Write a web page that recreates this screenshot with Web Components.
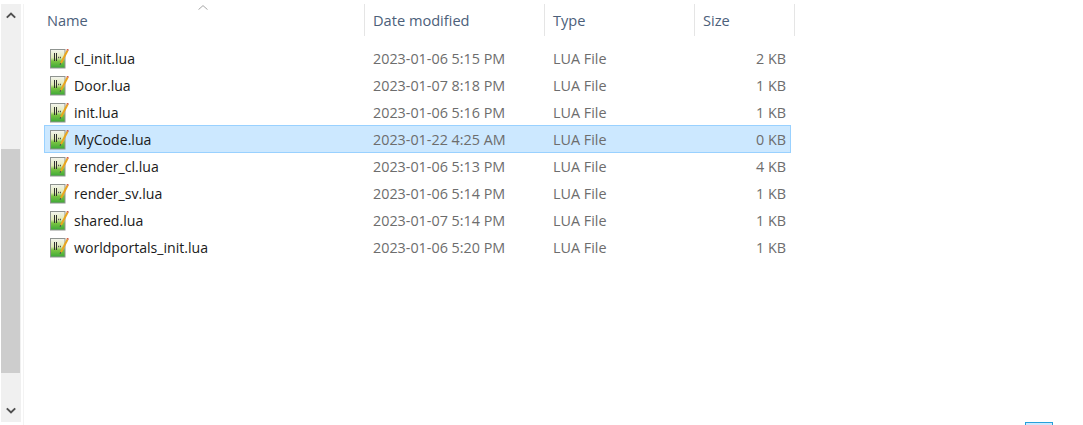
<!DOCTYPE html>
<html><head><meta charset="utf-8">
<style>
html,body{margin:0;padding:0;background:#fff;height:425px;overflow:hidden;font-family:"Open Sans","Noto Sans",sans-serif;}
</style></head><body>
<template id="t-icon"><style>:host{display:block;width:22px;height:20px;flex:none}svg{display:block}</style>
<svg width="22" height="20" viewBox="0 0 22 20">
<defs><linearGradient id="g" x1="0" y1="0" x2="0" y2="1"><stop offset="0" stop-color="#f4f4f0"/><stop offset=".45" stop-color="#dfeab4"/><stop offset=".62" stop-color="#7cc443"/><stop offset="1" stop-color="#3aa836"/></linearGradient></defs>
<rect x="2.5" y="0.5" width="14.5" height="18.5" fill="url(#g)" stroke="#8f9490"/>
<path d="M6.5 4v8M8.5 4v8" stroke="#2e2e2e" stroke-width="1"/>
<path d="M10 8.5h1.2M12 8.5h1" stroke="#555" stroke-width="1.3"/>
<path d="M13 14 L19.5 1.5" stroke="#eaa51f" stroke-width="2"/>
<path d="M18.8 .3l1.8 1" stroke="#d05a40" stroke-width="1.4"/>
<path d="M12.1 16l.5-2" stroke="#555" stroke-width="1"/>
</svg></template>
<template id="t-scroll"><style>
:host{display:flex;flex-direction:column;width:20px;height:418px;margin:4px 0 0 1px;background:#f0f0f0;flex:none;position:relative}
.btn{height:23px;display:flex;align-items:center;justify-content:center;flex:none;padding-right:1px}
.sp1{height:122px;flex:none}.thumb{height:224px;width:19px;background:#cdcdcd;flex:none}.sp2{flex:1}
svg{display:block}
</style>
<div class="btn"><svg width="10" height="7" viewBox="0 0 10 7"><path d="M.8 5.6 5 1.6l4.2 4" fill="none" stroke="#505050" stroke-width="2"/></svg></div>
<div class="sp1"></div><div class="thumb"></div><div class="sp2"></div>
<div class="btn"><svg width="10" height="7" viewBox="0 0 10 7"><path d="M.8 1.4 5 5.4l4.2-4" fill="none" stroke="#505050" stroke-width="2"/></svg></div>
</template>
<template id="t-head"><style>
:host{display:block;box-sizing:border-box;height:32px;flex:none;position:relative}
.r{display:grid;grid-template-columns:321px 180px 150px 100px;margin-left:20px;width:752px;height:32px;font-size:14.6px;color:#4c607a}
</style><div class="r"><slot></slot></div>
<svg style="position:absolute;left:174px;top:1px" width="10" height="5" viewBox="0 0 10 5"><path d="M.5 4.6 5 .6l4.5 4" fill="none" stroke="#a6a6a6" stroke-width="1"/></svg></template>
<template id="t-col"><style>
:host{display:flex;align-items:center;box-sizing:border-box;padding-left:8px;padding-right:6px;border-right:1px solid #e5e5e5;height:32px}
:host([first]){padding-left:3px}
</style><slot></slot></template>
<template id="t-row"><style>
:host{display:grid;grid-template-columns:321px 180px 150px 96px;height:27px;box-sizing:border-box;width:747px;font-size:14.35px;color:#6d6d6d;align-items:center}
:host([selected]){background:#cce8ff;box-shadow:0 -1px 0 #99d1ff,inset 1px 0 #99d1ff,inset -1px 0 #99d1ff,inset 0 -1px #99d1ff}
.n{display:flex;align-items:center;gap:4px;padding-left:4px;color:#1a1a1a;white-space:nowrap;font-size:14.1px}
.d,.t{padding-left:8px;white-space:nowrap}
.s{text-align:right;padding-right:5px;white-space:nowrap}
</style>
<div class="n"><file-icon></file-icon><span id="n"></span></div><div class="d" id="d"></div><div class="t">LUA File</div><div class="s" id="s"></div></template>
<template id="t-app"><style>
:host{display:flex;width:1083px;height:425px;position:relative;overflow:hidden;background:#fff}
.main{flex:1;display:flex;flex-direction:column;margin-left:2px;border-left:1px solid #f3f3f3;margin-top:4px}
.rows{display:flex;flex-direction:column;margin-left:20px;margin-top:9px}
.mark{position:absolute;left:1025px;top:422px;width:28px;height:10px;box-sizing:border-box;background:#cce8ff;border:1px solid #26a0da}
</style>
<scroll-bar></scroll-bar>
<div class="main"><list-head><head-col first>Name</head-col><head-col>Date modified</head-col><head-col>Type</head-col><head-col>Size</head-col></list-head>
<div class="rows"><slot></slot></div></div><div class="mark"></div></template>
<file-list>
<file-row name="cl_init.lua" date="2023-01-06 5:15 PM" size="2 KB"></file-row>
<file-row name="Door.lua" date="2023-01-07 8:18 PM" size="1 KB"></file-row>
<file-row name="init.lua" date="2023-01-06 5:16 PM" size="1 KB"></file-row>
<file-row name="MyCode.lua" date="2023-01-22 4:25 AM" size="0 KB" selected></file-row>
<file-row name="render_cl.lua" date="2023-01-06 5:13 PM" size="4 KB"></file-row>
<file-row name="render_sv.lua" date="2023-01-06 5:14 PM" size="1 KB"></file-row>
<file-row name="shared.lua" date="2023-01-07 5:14 PM" size="1 KB"></file-row>
<file-row name="worldportals_init.lua" date="2023-01-06 5:20 PM" size="1 KB"></file-row>
</file-list>
<script>
function make(tag,id,init){customElements.define(tag,class extends HTMLElement{constructor(){super();const s=this.attachShadow({mode:'open'});s.appendChild(document.getElementById(id).content.cloneNode(true));}connectedCallback(){if(init)init(this,this.shadowRoot);}});}
make('file-icon','t-icon');make('scroll-bar','t-scroll');make('list-head','t-head');make('head-col','t-col');make('file-list','t-app');
make('file-row','t-row',(h,s)=>{s.getElementById('n').textContent=h.getAttribute('name');s.getElementById('d').textContent=h.getAttribute('date');s.getElementById('s').textContent=h.getAttribute('size');});
</script>
</body></html>
